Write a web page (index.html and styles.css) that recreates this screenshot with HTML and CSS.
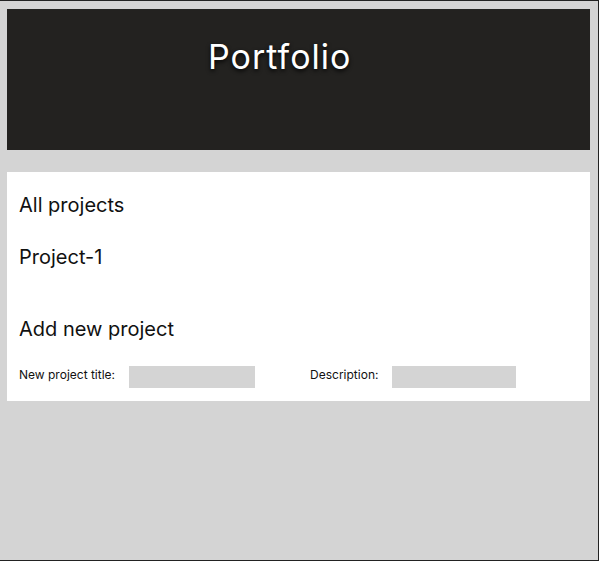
FILE: index.html
```html
<!DOCTYPE html>
<html lang="en">
<head>
<meta charset="utf-8">
<title>Portfolio</title>
<link rel="stylesheet" href="styles.css">
</head>
<body>
<div class="frame">
  <header class="header">
    <h1 class="title">Portfolio</h1>
  </header>
  <main class="card">
    <h2 class="heading">All projects</h2>
    <div class="project">Project-1</div>
    <h2 class="heading add">Add new project</h2>
    <form class="form">
      <div class="field">
        <label class="label" for="t">New project title:</label>
        <input class="input input-title" id="t" type="text">
      </div>
      <div class="field">
        <label class="label" for="d">Description:</label>
        <input class="input input-desc" id="d" type="text">
      </div>
    </form>
  </main>
</div>
</body>
</html>
```
FILE: styles.css
```css
html, body {
  margin: 0;
  padding: 0;
}
body {
  font-family: Inter, "Noto Sans", sans-serif;
  color: #111;
  background: #d4d4d4;
}
.frame {
  box-sizing: border-box;
  width: 599px;
  height: 561px;
  background: #d4d4d4;
  border-top: 1px solid #222;
  border-right: 1px solid #222;
  border-bottom: 1px solid #222;
  padding: 8px 8px 8px 7px;
  display: flex;
  flex-direction: column;
  gap: 22px;
}
.header {
  height: 141px;
  background: #232220;
  box-sizing: border-box;
  padding: 27px 0 0 201px;
}
.title {
  margin: 0;
  font-size: 34px;
  font-weight: 400;
  letter-spacing: 1px;
  line-height: 41px;
  color: #fff;
  text-shadow: 0 2px 4px rgba(0, 0, 0, 0.9);
}
.card {
  background: #fff;
  padding: 21px 12px 13px 12px;
  display: flex;
  flex-direction: column;
}
.heading {
  margin: 0;
  font-size: 20px;
  font-weight: 400;
  line-height: 24px;
}
.project {
  margin-top: 28px;
  font-size: 20px;
  line-height: 24px;
}
.add {
  margin-top: 48px;
}
.form {
  margin: 25px 0 0 0;
  display: flex;
  align-items: flex-start;
  gap: 55px;
}
.field {
  display: flex;
  align-items: flex-start;
}
.label {
  font-size: 12px;
  line-height: 15px;
  margin: 1px 14px 0 0;
}
.input {
  box-sizing: border-box;
  height: 22px;
  border: none;
  background: #d4d4d4;
  margin: 0;
  padding: 0;
}
.input-title {
  width: 126px;
}
.input-desc {
  width: 124px;
}
```
